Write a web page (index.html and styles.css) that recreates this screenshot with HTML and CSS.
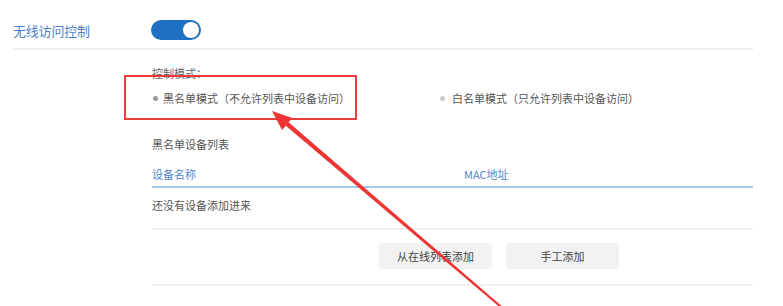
FILE: index.html
```html
<!DOCTYPE html>
<html lang="zh-CN">
<head>
<meta charset="utf-8">
<title>无线访问控制</title>
<link rel="stylesheet" href="styles.css">
</head>
<body>
<div class="page">
  <div class="switch-row">
    <div class="switch-label">无线访问控制</div>
    <div class="toggle"><span class="knob"></span></div>
  </div>

  <div class="content">
    <div class="mode-title">控制模式：</div>
    <div class="radios">
      <label class="radio radio-first"><span class="dot dot-on"></span>黑名单模式（不允许列表中设备访问）</label>
      <label class="radio radio-second"><span class="dot"></span>白名单模式（只允许列表中设备访问）</label>
    </div>

    <div class="list-title">黑名单设备列表</div>
    <div class="table-head">
      <span>设备名称</span>
      <span>MAC地址</span>
    </div>
    <div class="table-empty">还没有设备添加进来</div>
    <div class="actions">
      <button class="btn btn-wide">从在线列表添加</button>
      <button class="btn btn-wide">手工添加</button>
    </div>
  </div>

  <div class="highlight-box"></div>
  <svg class="arrow" width="783" height="306" viewBox="0 0 783 306">
    <polygon fill="#ee3535" points="272,111 292.4,117.9 288.6,122.3 515.85,318.24 514.55,319.76 285.8,125.7 282,130.1"/>
  </svg>
</div>
</body>
</html>
```
FILE: styles.css
```css
html, body {
  margin: 0;
  padding: 0;
  background: #ffffff;
}

body {
  font-family: "Noto Sans CJK SC", "Noto Sans", sans-serif;
  color: #555555;
}

.page {
  position: relative;
  width: 783px;
  height: 306px;
  overflow: hidden;
}

.switch-row {
  display: flex;
  align-items: center;
  margin-left: 13px;
  width: 740px;
  height: 48px;
  padding-top: 12px;
  box-sizing: border-box;
  border-bottom: 2px solid #eeeeee;
  height: 50px;
}

.switch-label {
  width: 138px;
  font-size: 13px;
  line-height: 19px;
  color: #4a7fc4;
  letter-spacing: -0.2px;
}

.toggle {
  position: relative;
  width: 50px;
  height: 20px;
  border-radius: 10px;
  background: #1f6fc2;
}

.knob {
  position: absolute;
  right: 2px;
  top: 2px;
  width: 16px;
  height: 16px;
  border-radius: 50%;
  background: #ffffff;
}

.content {
  margin-left: 152px;
  width: 601px;
  font-size: 11px;
  line-height: 16px;
}

.mode-title {
  margin-top: 15px;
  color: #666666;
}

.radios {
  display: flex;
  margin-top: 9px;
}

.radio {
  display: flex;
  align-items: center;
  color: #555555;
}

.radio-first {
  width: 287px;
  padding-left: 1px;
}

.dot {
  width: 5px;
  height: 5px;
  border-radius: 50%;
  background: #cccccc;
  margin-right: 7px;
}

.dot-on {
  background: #999999;
  margin-right: 5px;
}

.list-title {
  margin-top: 30px;
  color: #555555;
}

.table-head {
  display: grid;
  grid-template-columns: 312px 1fr;
  margin-top: 14px;
  padding-bottom: 4px;
  border-bottom: 2px solid #a8c7ea;
  color: #4f86cc;
}

.table-empty {
  padding: 9px 0 15px;
  border-bottom: 2px solid #f0f0f0;
  color: #555555;
}

.actions {
  display: flex;
  gap: 14px;
  padding: 13px 0 15px 227px;
  border-bottom: 2px solid #f0f0f0;
}

.btn {
  width: 113px;
  height: 26px;
  border: none;
  border-radius: 3px;
  background: #f2f2f2;
  font-family: "Noto Sans CJK SC", "Noto Sans", sans-serif;
  font-size: 11px;
  color: #444444;
  padding: 0;
}

.highlight-box {
  position: absolute;
  left: 124px;
  top: 75px;
  width: 233px;
  height: 45px;
  box-sizing: border-box;
  border: 2px solid #ea3a3a;
}

.arrow {
  position: absolute;
  left: 0;
  top: 0;
}
```
